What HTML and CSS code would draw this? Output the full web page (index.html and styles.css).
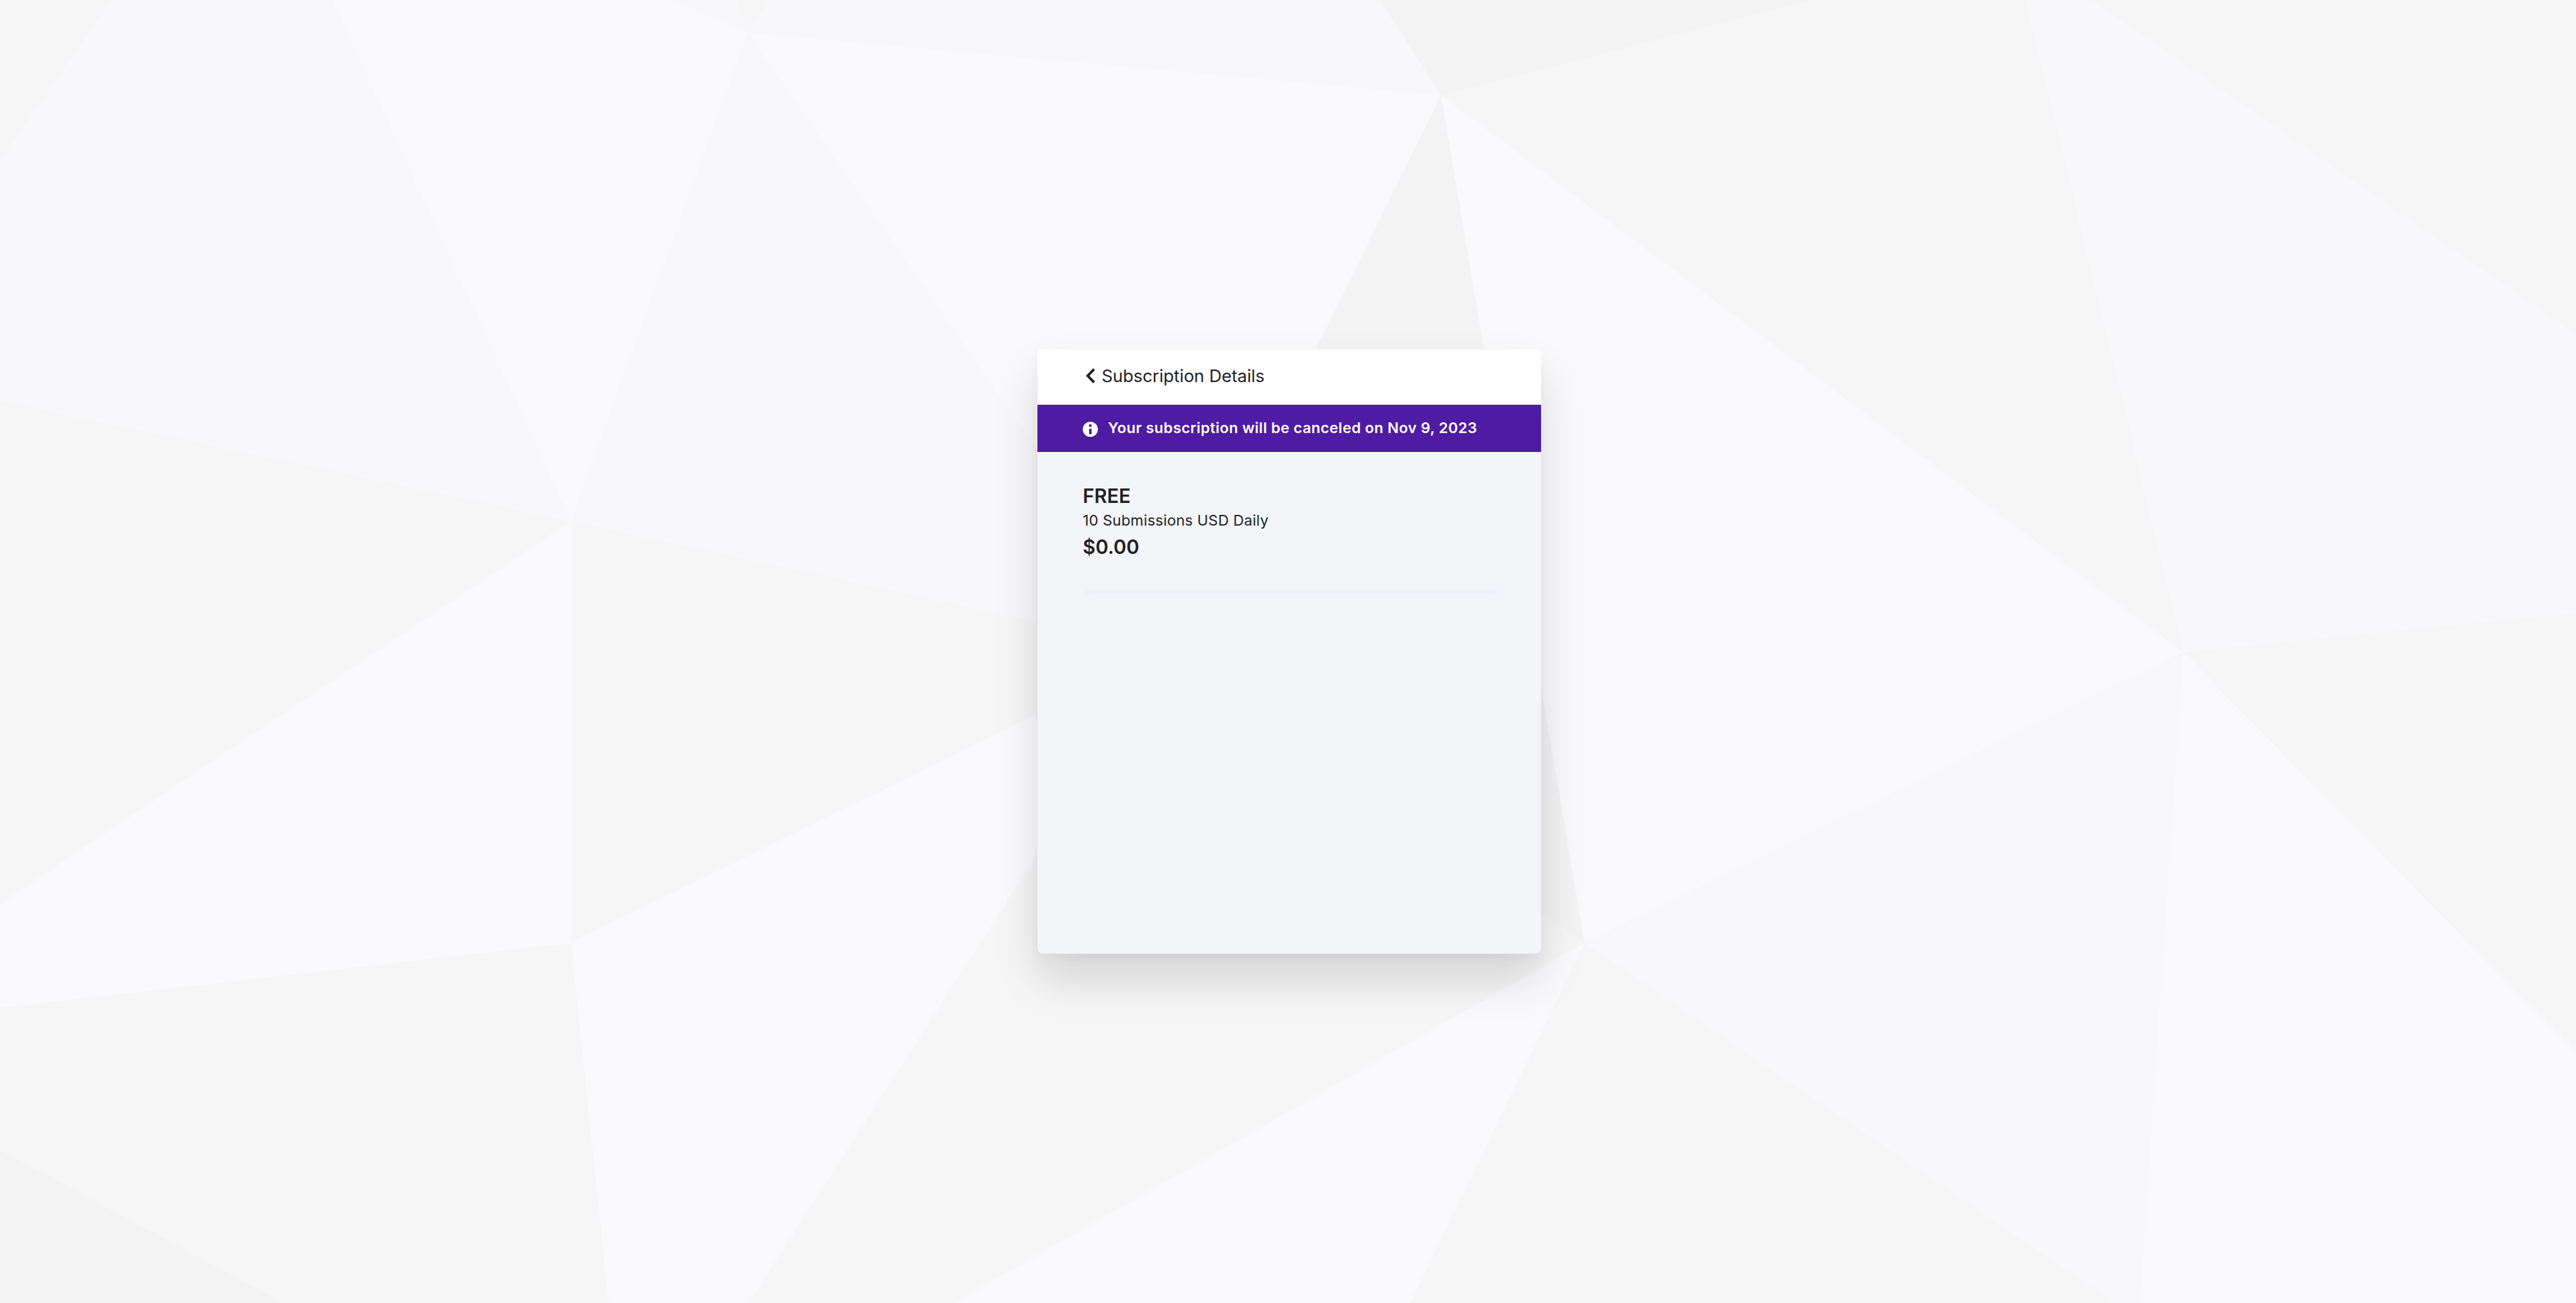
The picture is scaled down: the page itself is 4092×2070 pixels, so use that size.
FILE: index.html
```html
<!DOCTYPE html>
<html lang="en">
<head>
<meta charset="utf-8">
<title>Subscription Details</title>
<link rel="stylesheet" href="styles.css">
</head>
<body>
<svg class="backdrop" viewBox="0 0 4092 2070" preserveAspectRatio="none" aria-hidden="true">
  <rect class="grey" width="4092" height="2070"/>
  <polygon class="mid" points="178,0 528,0 907,828 0,637 0,255"/>
  <polygon class="light" points="528,0 1070,0 1188,52 907,828"/>
  <polygon class="mid" points="1070,0 1170,0 1188,52"/>
  <polygon class="mid" points="1223,0 2192,0 2289,151 1188,52"/>
  <polygon class="mid" points="1188,52 2000,1220 2000,1064 907,828"/>
  <polygon class="light" points="1188,52 2289,151 2090,554 1900,940 1800,934"/>
  <polygon class="dark" points="2192,0 2876,0 2289,151"/>
  <polygon class="dark" points="2289,151 2517,1498 2448,1451 1900,940"/>
  <polygon class="light" points="2289,151 3468,1036 2517,1498"/>
  <polygon class="mid" points="3218,0 3322,0 4092,531 4092,974 3468,1036"/>
  <polygon class="light" points="907,828 907,1498 0,1601 0,1436"/>
  <polygon class="light" points="907,1498 1648,1134 1800,1121 1648,1357 1189,2070 967,2070"/>
  <polygon class="light" points="2517,1498 2240,2070 1515,2070"/>
  <polygon class="mid" points="2517,1498 3468,1036 3399,2070 3360,2070"/>
  <polygon class="light" points="3468,1036 4092,1672 4092,2070 3399,2070"/>
  <polygon class="dark" points="0,1827 450,2070 0,2070"/>
</svg>
<main class="card">
  <header class="card-header">
    <svg class="chevron" viewBox="0 0 15 24" aria-hidden="true"><path d="M13 1.5 2.8 12 13 22.5"/></svg>
    <h1 class="title">Subscription Details</h1>
  </header>
  <div class="notice">
    <svg class="info" viewBox="0 0 24 24" aria-hidden="true"><circle cx="12" cy="12" r="12" fill="#fff"/><path d="M10 4.3h4v3.6h-4zM10 11.2h4v8.6h-4z" fill="#4e1ca2"/></svg>
    <span class="notice-text">Your subscription will be canceled on Nov 9, 2023</span>
  </div>
  <section class="plan">
    <h2 class="plan-name">FREE</h2>
    <p class="plan-info">10 Submissions USD Daily</p>
    <p class="plan-price">$0.00</p>
    <div class="divider"></div>
  </section>
</main>
</body>
</html>
```
FILE: styles.css
```css
* { box-sizing: border-box; margin: 0; }

body {
  height: 100vh;
  padding-left: 4px;
  display: flex;
  align-items: center;
  justify-content: center;
  overflow: hidden;
  background: #f6f6f6;
  color: #212227;
  font-family: Inter, sans-serif;
}

.backdrop {
  position: absolute;
  inset: 0;
  width: 100%;
  height: 100%;
}

.grey { fill: #f6f6f6; }
.dark { fill: #f3f3f3; }
.mid { fill: #f8f8fa; }
.light { fill: #fafafc; }

.card {
  position: relative;
  width: 800px;
  height: 960px;
  border-radius: 8px;
  overflow: hidden;
  background: #f3f5f9;
  box-shadow: 0 40px 72px rgba(0, 0, 0, .14), 0 8px 16px rgba(0, 0, 0, .03);
}

.card-header {
  height: 88px;
  padding: 0 77px 4px;
  display: flex;
  align-items: center;
  gap: 10px;
  background: #fff;
}

.chevron {
  width: 15px;
  height: 24px;
  fill: none;
  stroke: #212227;
  stroke-width: 4;
}

.title {
  font-size: 27.5px;
  line-height: 34px;
  font-weight: 400;
  letter-spacing: -.05px;
}

.notice {
  height: 75px;
  padding: 0 72px;
  display: flex;
  align-items: center;
  gap: 16px;
  background: #4e1ca2;
  color: #fff;
}

.info {
  width: 24px;
  height: 24px;
  margin-top: 3px;
}

.notice-text {
  padding-bottom: 1px;
  font-size: 23.5px;
  line-height: 30px;
  font-weight: 600;
  letter-spacing: .38px;
}

.plan { padding: 48px 72px; }

.plan-name,
.plan-price {
  font-size: 31px;
  line-height: 44px;
  font-weight: 600;
}

.plan-info {
  margin: -1px 0 2px;
  font-size: 23.5px;
  line-height: 36px;
  letter-spacing: .25px;
}

.divider {
  height: 8px;
  margin-top: 45px;
  border-radius: 4px;
  background: #f0f1f5;
  box-shadow: 0 0 14px #f0f1f5;
}
```
